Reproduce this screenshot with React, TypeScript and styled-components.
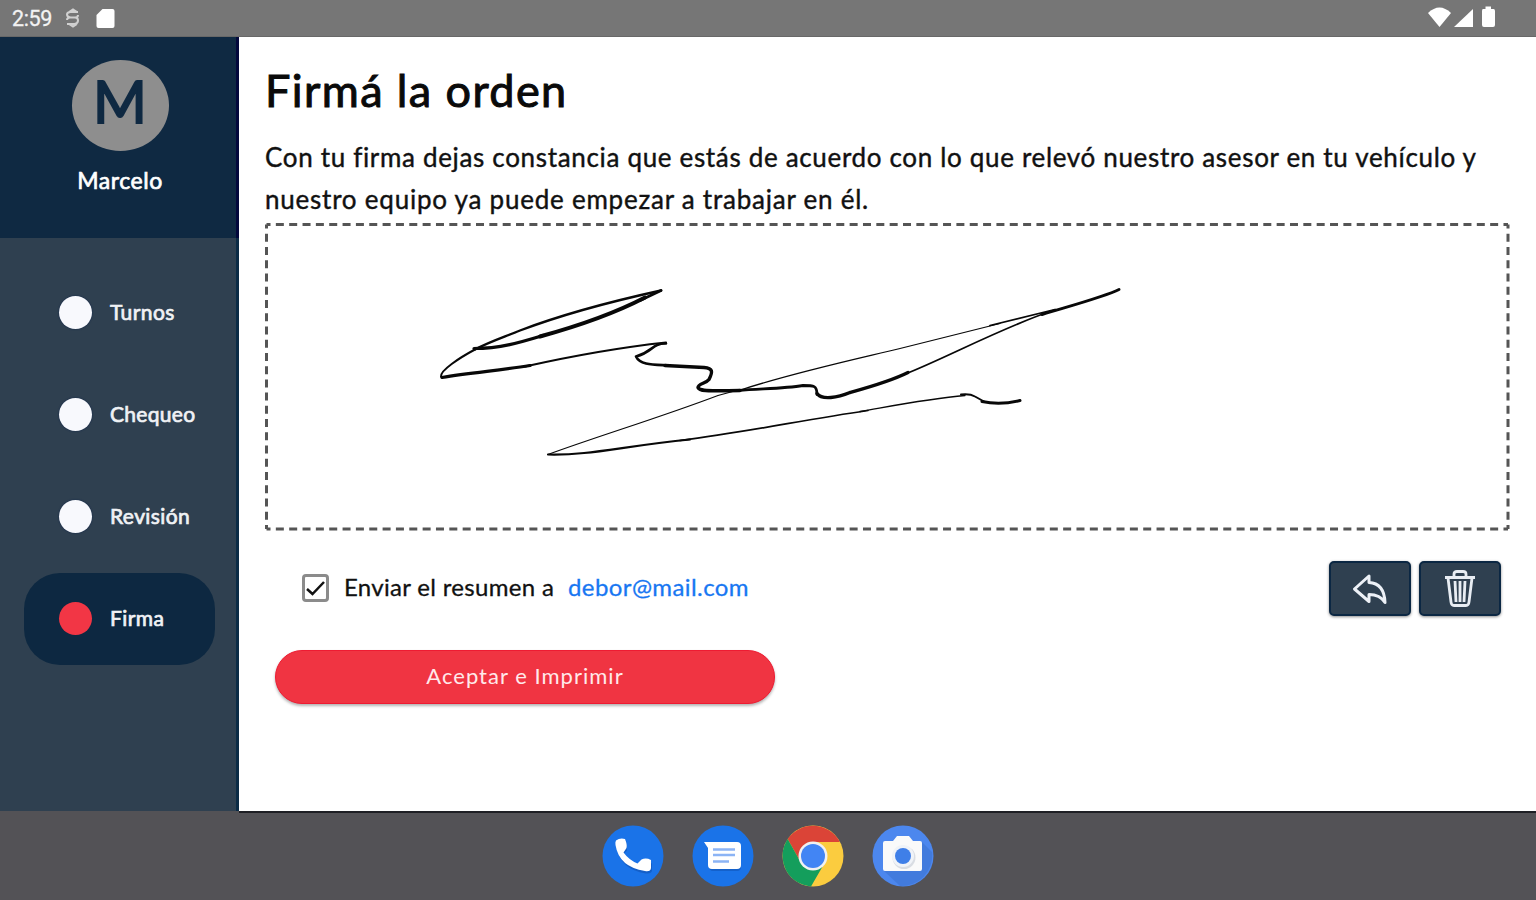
import React from "react";
import styled, { createGlobalStyle } from "styled-components";

const GlobalStyle = createGlobalStyle`
  * { box-sizing: border-box; }
  body { margin: 0; background: #fff; font-family: Lato, "Noto Sans", sans-serif; }
`;

const Screen = styled.div`
  width: 1536px;
  height: 900px;
  display: flex;
  flex-direction: column;
  overflow: hidden;
`;

const StatusBar = styled.header`
  height: 37px;
  flex: none;
  background: #767676;
  border-bottom: 1px solid #686868;
  display: flex;
  justify-content: space-between;
  padding: 0 38px 0 12px;
`;

const StatusGroup = styled.div`
  display: flex;
  align-items: center;
`;

const Clock = styled.span`
  font: 400 21.5px/37px Roboto, sans-serif;
  letter-spacing: -0.35px;
  color: #f2f2f2;
  width: 53px;
  -webkit-text-stroke: 0.3px #f2f2f2;
`;

const Body = styled.div`
  height: 774px;
  flex: none;
  display: flex;
`;

const Sidebar = styled.aside`
  width: 239px;
  flex: none;
  background: #2f4050;
  border-right: 3px solid #0b2b45;
`;

const Profile = styled.div`
  height: 201px;
  width: 239px;
  background: #0f2942;
  border-right: 3px solid #03083c;
  display: flex;
  flex-direction: column;
  align-items: center;
  padding: 23px 0 0 4px;
`;

const Avatar = styled.div`
  width: 97px;
  height: 91px;
  border-radius: 50%;
  background: #8e8e8e;
  color: #0f2942;
  font-size: 58px;
  line-height: 82px;
  text-align: center;
  -webkit-text-stroke: 2px #0f2942;
`;

const UserName = styled.div`
  margin-top: 14px;
  font-size: 23px;
  line-height: 30px;
  letter-spacing: 0.55px;
  color: #fff;
  -webkit-text-stroke: 0.7px #fff;
`;

const Nav = styled.nav`
  display: flex;
  flex-direction: column;
  gap: 10px;
  padding: 28.5px 0 0 24px;
`;

const NavItem = styled.a<{ $active?: boolean }>`
  width: 191px;
  height: 92px;
  border-radius: 36px;
  display: flex;
  align-items: center;
  padding-left: 35px;
  gap: 18px;
  background: ${(p) => (p.$active ? "#0d2841" : "transparent")};
`;

const Dot = styled.span<{ $active?: boolean }>`
  width: 33px;
  height: 33px;
  border-radius: 50%;
  background: ${(p) => (p.$active ? "#f23645" : "#f8f9fd")};
  box-shadow: 0 0 2px ${(p) => (p.$active ? "transparent" : "#10244a")};
`;

const NavLabel = styled.span<{ $spacing: number }>`
  font-size: 21px;
  line-height: 30px;
  padding-bottom: 2px;
  letter-spacing: ${(p) => p.$spacing}px;
  color: #f0f2f5;
  -webkit-text-stroke: 0.7px #f0f2f5;
`;

const Main = styled.main`
  flex: 1;
  background: #fff;
  padding: 23px 26px 0 26px;
`;

const Title = styled.h1`
  margin: 0;
  font-size: 45px;
  line-height: 60px;
  font-weight: 400;
  letter-spacing: 1.4px;
  color: #0a0a0a;
  -webkit-text-stroke: 1px #0a0a0a;
`;

const Intro = styled.p`
  margin: 16px 0 0;
  font-size: 26px;
  line-height: 42px;
  color: #111;
  -webkit-text-stroke: 0.4px #111;
`;

const Line = styled.span<{ $spacing: number }>`
  display: block;
  white-space: nowrap;
  letter-spacing: ${(p) => p.$spacing}px;
`;

const Pad = styled.div`
  width: 1245px;
  height: 309px;
  margin-top: 2px;
  svg { display: block; }
`;

const Options = styled.div`
  display: flex;
  align-items: flex-start;
  height: 56px;
  margin-top: 30px;
  padding: 0 9px 0 37px;
`;

const Check = styled.span`
  width: 27px;
  height: 28px;
  margin: 13px 15px 0 0;
  border: 3px solid #8b8b8b;
  border-radius: 4px;
  display: flex;
  svg { display: block; }
`;

const CheckLabel = styled.span`
  font-size: 24px;
  line-height: 52px;
  letter-spacing: 0.32px;
  color: #111;
  width: 224px;
  white-space: nowrap;
  -webkit-text-stroke: 0.3px #111;
`;

const Mail = styled.a`
  font-size: 24px;
  line-height: 52px;
  letter-spacing: 0.4px;
  color: #1877f2;
  -webkit-text-stroke: 0.3px #1877f2;
`;

const Tools = styled.div`
  display: flex;
  gap: 8px;
  margin-left: auto;
`;

const ToolButton = styled.button`
  width: 82px;
  height: 55px;
  padding: 0;
  border: 2px solid #0b2743;
  border-radius: 5px;
  background: #2f4050;
  box-shadow: 0 1px 3px rgba(0, 0, 0, 0.45);
  display: flex;
  align-items: center;
  justify-content: center;
`;

const Accept = styled.button`
  display: block;
  width: 500px;
  height: 54px;
  margin: 33px 0 0 10px;
  padding: 0 0 3px;
  border: 1px solid #ee1b32;
  border-radius: 27px;
  background: #f03442;
  box-shadow: 0 2px 3px rgba(0, 0, 0, 0.3);
  color: #ffe9ea;
  font: 400 22px/40px Lato, sans-serif;
  letter-spacing: 1.02px;
`;

const Dock = styled.footer`
  height: 89px;
  flex: none;
  background: linear-gradient(#1e1f24, #1e1f24) 239px 0 / 1297px 2px no-repeat #535256;
  display: flex;
  justify-content: center;
  gap: 28px;
  padding: 13.5px 0 0;
`;

const SIZE = 62;

const signature: { d: string; w: number }[] = [
  { w: 2.4, d: "M661 291C620 300 570 312 520 331C503 338 490 342 475 350" },
  { w: 2, d: "M475 350C460 358 440 371 441 377" },
  { w: 3, d: "M661 291L640 301" },
  { w: 4, d: "M645 298C620 311 580 326 540 337" },
  { w: 3.2, d: "M543 336C520 343 500 349 474 349" },
  { w: 3.2, d: "M442 378C470 373 500 371 530 366" },
  { w: 2.2, d: "M525 367C570 357 610 349 666 343" },
  { w: 2.6, d: "M666 344C651 344 654 352 636 357C640 366 655 365 670 366" },
  { w: 3.4, d: "M665 366L704 368C713 369 713 372 709 380C706 384 698 384 698 388C700 393 715 391 740 391" },
  { w: 2.8, d: "M738 391C765 389 785 389 803 386C814 386 817 386 817 395" },
  { w: 3.4, d: "M817 394C822 401 838 398 850 393C868 388 890 382 908 373" },
  { w: 1.8, d: "M904 375C945 359 1000 329 1050 312" },
  { w: 3, d: "M1042 315C1075 305 1105 297 1119 290" },
  { w: 1.8, d: "M1055 310L990 326" },
  { w: 1.25, d: "M1000 324L900 349C850 361 790 374 739 391" },
  { w: 1.2, d: "M740 390L718 396C660 418 600 436 548 455" },
  { w: 2.2, d: "M548 455C590 456 620 447 690 440" },
  { w: 1.7, d: "M680 441C750 432 800 421 868 411" },
  { w: 1.3, d: "M860 412C900 405 930 399 965 396" },
  { w: 2, d: "M961 395Q970 394 975 397L984 402" },
  { w: 3, d: "M982 402Q1000 406 1020 401" },
];

const SignaturePad = () => (
  <Pad>
    <svg width="1245" height="309" viewBox="265 222.500 1245 309" fill="none">
      <g stroke="#555" strokeWidth="3">
        <path d="M266.500 225H1508" strokeDasharray="8 5.344" strokeDashoffset="4" />
        <path d="M266.500 529.500H1508" strokeDasharray="8 5.344" strokeDashoffset="4" />
        <path d="M266.500 225V529.500" strokeDasharray="8 5.240" strokeDashoffset="4" />
        <path d="M1508 225V529.500" strokeDasharray="8 5.240" strokeDashoffset="4" />
      </g>
      <g stroke="#080808" strokeLinecap="round" strokeLinejoin="round">
        {signature.map((s) => (
          <path key={s.d} d={s.d} strokeWidth={s.w} />
        ))}
      </g>
    </svg>
  </Pad>
);

const steps = [
  { label: "Turnos", spacing: 0.4 },
  { label: "Chequeo", spacing: 0.3 },
  { label: "Revisión", spacing: 0.4 },
  { label: "Firma", spacing: 0.4, active: true },
];

export default function App() {
  return (
    <Screen>
      <GlobalStyle />
      <StatusBar>
        <StatusGroup>
          <Clock>2:59</Clock>
          <svg width="52" height="36" fill="none">
            <path d="M13 12H5.500Q2 12 2 14.500T5.500 17.500H10Q13 17.500 13 20.500T9.500 24H2M2 20Q2 17.500 5 17.500H10Q13 17.500 13 15M4 24L8 26.500L12 24M4 12L8 9.500L12 12" stroke="#d0d0d0" strokeWidth="2" />
            <path d="M38 9H48Q50 9 50 11V26Q50 28 48 28H34Q32 28 32 26V15Z" transform="translate(-.5 0)" fill="#fff" />
          </svg>
        </StatusGroup>
        <StatusGroup>
          <svg width="70" height="36" fill="#fff">
            <path d="M0 13Q11.500 2 23 13L11.500 27Z" />
            <path d="M26 27L45 9V27Z" />
            <path d="M55 9H57.500V6.500H63V9H65.500Q67 9 67 11V25Q67 27 65 27H56Q54 27 54 25V11Q54 9 55 9Z" />
          </svg>
        </StatusGroup>
      </StatusBar>
      <Body>
        <Sidebar>
          <Profile>
            <Avatar>M</Avatar>
            <UserName>Marcelo</UserName>
          </Profile>
          <Nav>
            {steps.map((s) => (
              <NavItem key={s.label} $active={s.active}>
                <Dot $active={s.active} />
                <NavLabel $spacing={s.spacing}>{s.label}</NavLabel>
              </NavItem>
            ))}
          </Nav>
        </Sidebar>
        <Main>
          <Title>Firmá la orden</Title>
          <Intro>
            <Line $spacing={0.67}>
              Con tu firma dejas constancia que estás de acuerdo con lo que relevó nuestro asesor en tu vehículo y
            </Line>
            <Line $spacing={0.77}>nuestro equipo ya puede empezar a trabajar en él.</Line>
          </Intro>
          <SignaturePad />
          <Options>
            <Check>
              <svg width="21" height="22" fill="none">
                <path d="M2 12L7.500 17L19 5" stroke="#111" strokeWidth="2.500" />
              </svg>
            </Check>
            <CheckLabel>Enviar el resumen a</CheckLabel>
            <Mail>debor@mail.com</Mail>
            <Tools>
              <ToolButton aria-label="Deshacer">
                <svg width="38" height="34" fill="none" stroke="#edf1f7" strokeWidth="3" strokeLinejoin="round">
                  <path d="M3.500 17L18 4V10.500C29 11 33.500 19 34 30.500C30 24 25 22.500 18 22.500V29.500Z" />
                </svg>
              </ToolButton>
              <ToolButton aria-label="Borrar">
                <svg width="34" height="40" fill="none" stroke="#e8edf3" strokeWidth="2.800" strokeLinejoin="round">
                  <path d="M2 8.500H32M11 8V5Q11 2.500 14 2.500H20Q23 2.500 23 5V8" />
                  <path d="M5 9L8 33Q8.300 36.500 11 36.500H23Q25.700 36.500 26 33L29 9M12 12L13 33M17 12V33M22 12L21 33" />
                </svg>
              </ToolButton>
            </Tools>
          </Options>
          <Accept>Aceptar e Imprimir</Accept>
        </Main>
      </Body>
      <Dock>
        <svg width={SIZE} height={SIZE} viewBox="0 0 62 62">
          <circle cx="31" cy="31" r="30.500" fill="#1a73e8" />
          <path d="M14 15.500Q18 12.500 23 14Q24.500 20 24 24L20.500 27.500Q25 36 35.500 40.500L39.500 36.500Q44 35.500 49 37V44Q48.500 47.500 43 47Q17 43 13.500 20Q13 17 14 15.500Z" fill="#0d47a1" opacity=".45" transform="translate(1 1.500)" />
          <path d="M14 15.500Q18 12.500 23 14Q25.500 20 24.500 23L21.500 27.500Q27 35 35.500 38.500L39.500 34.500Q44 32.500 49 35V43Q48.500 47 43 46Q17 42 13.500 20Q13 17 14 15.500Z" fill="#fff" />
        </svg>
        <svg width={SIZE} height={SIZE} viewBox="0 0 62 62">
          <circle cx="31" cy="31" r="30.500" fill="#1a73e8" />
          <path d="M13 18L17 25V41Q17 46 21 46H45Q49 46 49 42V22Z" fill="#0d47a1" opacity=".4" />
          <path d="M12 17H45Q49 17 49 21V40Q49 44 45 44H20Q16 44 16 40V23Z" fill="#fff" />
          <path d="M21 24.500H43M21 30H43M21 36.500H37" stroke="#8cb4f5" strokeWidth="2.500" />
        </svg>
        <svg width={SIZE} height={SIZE} viewBox="0 0 62 62">
          <circle cx="31" cy="31" r="30.500" fill="#fbcc3f" />
          <path d="M5.700 14A30.500 30.500 0 0 1 57.800 17H31L18 36Z" fill="#db4437" />
          <path d="M5.700 14A30.500 30.500 0 0 0 29 61.430L42 39L31 44L18 36Z" fill="#149e5c" />
          <circle cx="31" cy="31" r="14.500" fill="#f1f1f1" />
          <circle cx="31" cy="31" r="12" fill="#4285f4" />
        </svg>
        <svg width={SIZE} height={SIZE} viewBox="0 0 62 62">
          <circle cx="31" cy="31" r="30.500" fill="#4c87ee" />
          <path d="M50 17L60 27A30.500 30.500 0 0 1 28 61L12 46L50 44Z" fill="#3f76d5" opacity=".7" />
          <path d="M13 16H21L25 11H37L41 16H48Q50 16 50 18V44Q50 46 48 46H13Q11 46 11 44V18Q11 16 13 16Z" fill="#fafafa" />
          <circle cx="32" cy="32.500" r="11.500" fill="#d9dde3" />
          <circle cx="31" cy="31" r="11" fill="#f0f3f8" />
          <circle cx="31" cy="31" r="8" fill="#3f7fe8" />
        </svg>
      </Dock>
    </Screen>
  );
}
